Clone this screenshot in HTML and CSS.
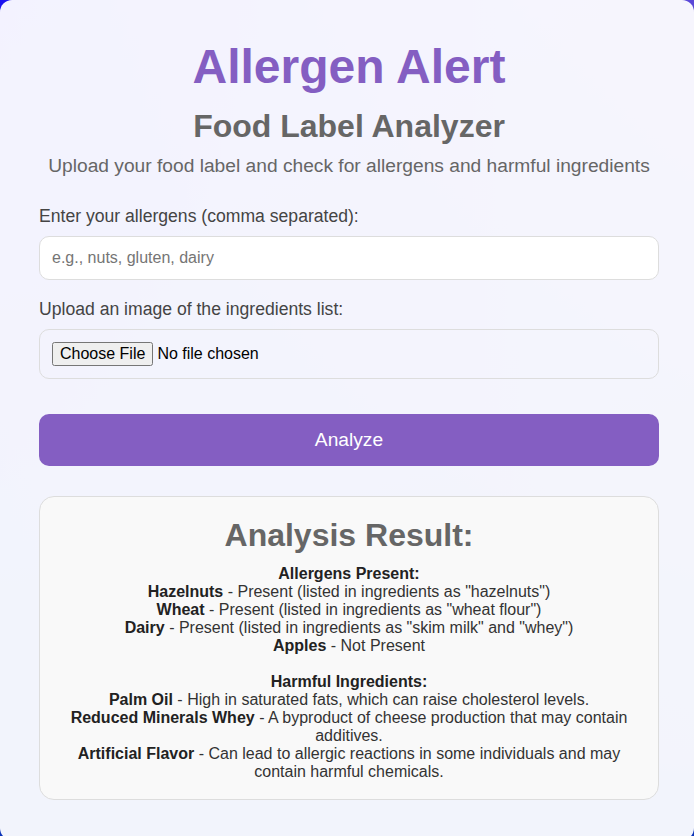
FILE: index.html
```html
<!DOCTYPE html>
<html lang="en">
<head>
<meta charset="utf-8">
<title>Allergen Alert</title>
<link rel="stylesheet" href="styles.css">
</head>
<body>
<div class="container">
  <h1 class="title">Allergen Alert</h1>
  <h2 class="subtitle">Food Label Analyzer</h2>
  <p class="intro">Upload your food label and check for allergens and harmful ingredients</p>

  <div class="form-group">
    <label class="label" for="allergens">Enter your allergens (comma separated):</label>
    <input class="text-input" id="allergens" type="text" placeholder="e.g., nuts, gluten, dairy">
  </div>

  <div class="form-group">
    <label class="label" for="image">Upload an image of the ingredients list:</label>
    <div class="upload-box">
      <input class="file-input" id="image" type="file">
    </div>
  </div>

  <button class="analyze-btn" type="button">Analyze</button>

  <div class="result">
    <h2 class="result-title">Analysis Result:</h2>
    <div class="result-body">
      <b>Allergens Present:</b><br>
      <b>Hazelnuts</b> - Present (listed in ingredients as "hazelnuts")<br>
      <b>Wheat</b> - Present (listed in ingredients as "wheat flour")<br>
      <b>Dairy</b> - Present (listed in ingredients as "skim milk" and "whey")<br>
      <b>Apples</b> - Not Present<br>
      <br>
      <b>Harmful Ingredients:</b><br>
      <b>Palm Oil</b> - High in saturated fats, which can raise cholesterol levels.<br>
      <b>Reduced Minerals Whey</b> - A byproduct of cheese production that may contain additives.<br>
      <b>Artificial Flavor</b> - Can lead to allergic reactions in some individuals and may contain harmful chemicals.
    </div>
  </div>
</div>
</body>
</html>
```
FILE: styles.css
```css
html, body {
  margin: 0;
  padding: 0;
}

body {
  font-family: "Liberation Sans", Arial, sans-serif;
  min-height: 100vh;
  background:
    linear-gradient(to bottom, rgba(12, 52, 184, 0) 0%, rgba(12, 52, 184, 1) 100%),
    linear-gradient(to right, #1a10f0 0%, #5a48d8 100%);
  overflow: hidden;
}

.container {
  background: rgba(255, 255, 255, 0.95);
  border-radius: 12px;
  padding: 39px 35px 40px 39px;
  text-align: center;
}

.title {
  margin: 0;
  font-size: 48px;
  font-weight: bold;
  color: #845ec2;
}

.subtitle {
  margin: 14px 0 0;
  font-size: 32px;
  font-weight: bold;
  color: #666;
}

.intro {
  margin: 10px 0 0;
  font-size: 19.2px;
  color: #666;
  line-height: 22px;
}

.form-group {
  text-align: left;
  margin-top: 29px;
}

.form-group + .form-group {
  margin-top: 19px;
}

.label {
  display: block;
  font-size: 17.6px;
  line-height: 20px;
  color: #444;
  margin-bottom: 10px;
}

.text-input {
  display: block;
  box-sizing: border-box;
  width: 100%;
  height: 44px;
  padding: 12px;
  border: 1px solid #ddd;
  border-radius: 10px;
  background: #fff;
  font-family: "Liberation Sans", Arial, sans-serif;
  font-size: 16px;
  color: #333;
  outline: none;
}

.text-input::placeholder {
  color: #757575;
}

.upload-box {
  box-sizing: border-box;
  height: 50px;
  padding: 0 12px;
  border: 1px solid #ddd;
  border-radius: 10px;
  display: flex;
  align-items: center;
}

.file-input {
  font-family: "Liberation Sans", Arial, sans-serif;
  font-size: 16px;
  color: #000;
}

.analyze-btn {
  display: block;
  width: 100%;
  height: 52px;
  margin-top: 35px;
  border: none;
  border-radius: 10px;
  background: #845ec2;
  color: #fff;
  font-family: "Liberation Sans", Arial, sans-serif;
  font-size: 19.2px;
  cursor: pointer;
}

.result {
  margin-top: 30px;
  padding: 20px 20px 18px;
  background: #f9f9f9;
  border: 1px solid #ddd;
  border-radius: 15px;
  text-align: center;
}

.result-title {
  margin: 0 0 11px;
  font-size: 32px;
  font-weight: bold;
  color: #666;
}

.result-body {
  font-size: 16px;
  line-height: 18px;
  color: #333;
}

.result-body b {
  color: #222;
}
```
